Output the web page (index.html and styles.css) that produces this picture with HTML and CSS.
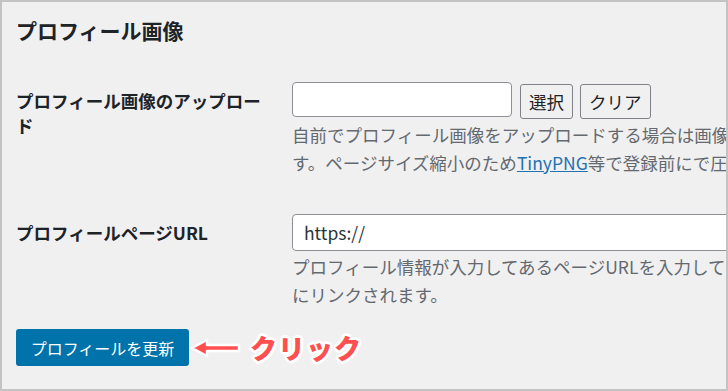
FILE: index.html
```html
<!DOCTYPE html>
<html lang="ja">
<head>
    <meta charset="UTF-8">
    <title>プロフィール画像</title>
    <link rel="stylesheet" href="styles.css">
</head>
<body>

<div class="frame">
    <h2>プロフィール画像</h2>

    <!-- Upload row -->
    <div class="form-row first">
        <div class="label">プロフィール画像のアップロード</div>
        <div class="field">
            <div class="inputs">
                <input type="text" class="text-input small">
                <button class="button">選択</button>
                <button class="button">クリア</button>
            </div>
            <p class="desc">自前でプロフィール画像をアップロードする場合は画像の縦横比を1:1にしてアップロードしてくださいま<br>す。ページサイズ縮小のため<a href="#">TinyPNG</a>等で登録前にで圧縮しておくことをお勧めします。</p>
        </div>
    </div>

    <!-- URL row -->
    <div class="form-row">
        <div class="label">プロフィールページURL</div>
        <div class="field">
            <div class="inputs">
                <input type="text" class="text-input wide" value="https://">
            </div>
            <p class="desc">プロフィール情報が入力してあるページURLを入力してください。プロフィール画像から入力したページ<br>にリンクされます。</p>
        </div>
    </div>

    <div class="submit-row">
        <button class="button-primary">プロフィールを更新</button>
        <svg class="arrow" width="52" height="28" viewBox="0 0 52 28">
            <path d="M2 14 L17 6 L17 11 L49 11 L49 17 L17 17 L17 22 Z" fill="#ff4f4f" stroke="#fff" stroke-width="2.5" stroke-linejoin="round"/>
        </svg>
        <span class="click">クリック</span>
    </div>
</div>

</body>
</html>
```

FILE: styles.css
```css
body {
    margin: 0;
    font-family: "Noto Sans CJK JP", "Noto Sans", sans-serif;
    color: #1d2327;
}
.frame {
    box-sizing: border-box;
    width: 728px;
    height: 391px;
    padding-left: 14px;
    background: #f0f0f1;
    border: 2px solid #c3c3c4;
    overflow: hidden;
}

h2 {
    margin: 14px 0 0;
    font-size: 21px;
    line-height: 28px;
    font-weight: bold;
}

.form-row {
    display: flex;
    margin-top: 37px;
}
.form-row.first {
    margin-top: 38px;
}
.label {
    flex: 0 0 250px;
    margin-right: 26px;
    padding-top: 6px;
    font-size: 17.5px;
    line-height: 25px;
    font-weight: bold;
}
.field {
    flex: 1;
    min-width: 0;
}
.inputs {
    display: flex;
    align-items: flex-start;
    white-space: nowrap;
}
.text-input {
    box-sizing: border-box;
    flex: none;
    height: 35px;
    padding: 0 11px;
    border: 1px solid #8c8f94;
    border-radius: 4px;
    background: #fff;
    font-family: inherit;
    font-size: 17.5px;
    color: #2c3338;
}
.text-input.small {
    width: 220px;
}
.text-input.wide {
    width: 700px;
    height: 37px;
}
.button {
    box-sizing: border-box;
    height: 35px;
    margin: 2px 0 0 8px;
    padding: 0 8px;
    border: 1px solid #7e8187;
    border-radius: 3px;
    background: #f0f0f1;
    font-family: inherit;
    font-size: 17.5px;
    color: #1d2327;
}
.button + .button {
    margin-left: 7px;
}
.desc {
    margin: 2px 0 0;
    font-size: 17.5px;
    line-height: 28px;
    color: #646970;
    white-space: nowrap;
}
.desc a {
    color: #2271b1;
}

.submit-row {
    display: flex;
    align-items: center;
    margin-top: 19px;
}
.button-primary {
    box-sizing: border-box;
    width: 173px;
    height: 37px;
    border: none;
    border-radius: 3px;
    background: #0073aa;
    color: #fff;
    font-family: inherit;
    font-size: 16px;
}
.arrow {
    margin-left: 1px;
}
.click {
    margin-left: 8px;
    font-size: 27px;
    font-weight: 900;
    letter-spacing: 1px;
    color: #ff4f4f;
    text-shadow:
        2px 0 0 #fff, -2px 0 0 #fff, 0 2px 0 #fff, 0 -2px 0 #fff,
        2px 2px 0 #fff, -2px -2px 0 #fff, 2px -2px 0 #fff, -2px 2px 0 #fff,
        3px 0 0 #fff, -3px 0 0 #fff, 0 3px 0 #fff, 0 -3px 0 #fff;
}
```
